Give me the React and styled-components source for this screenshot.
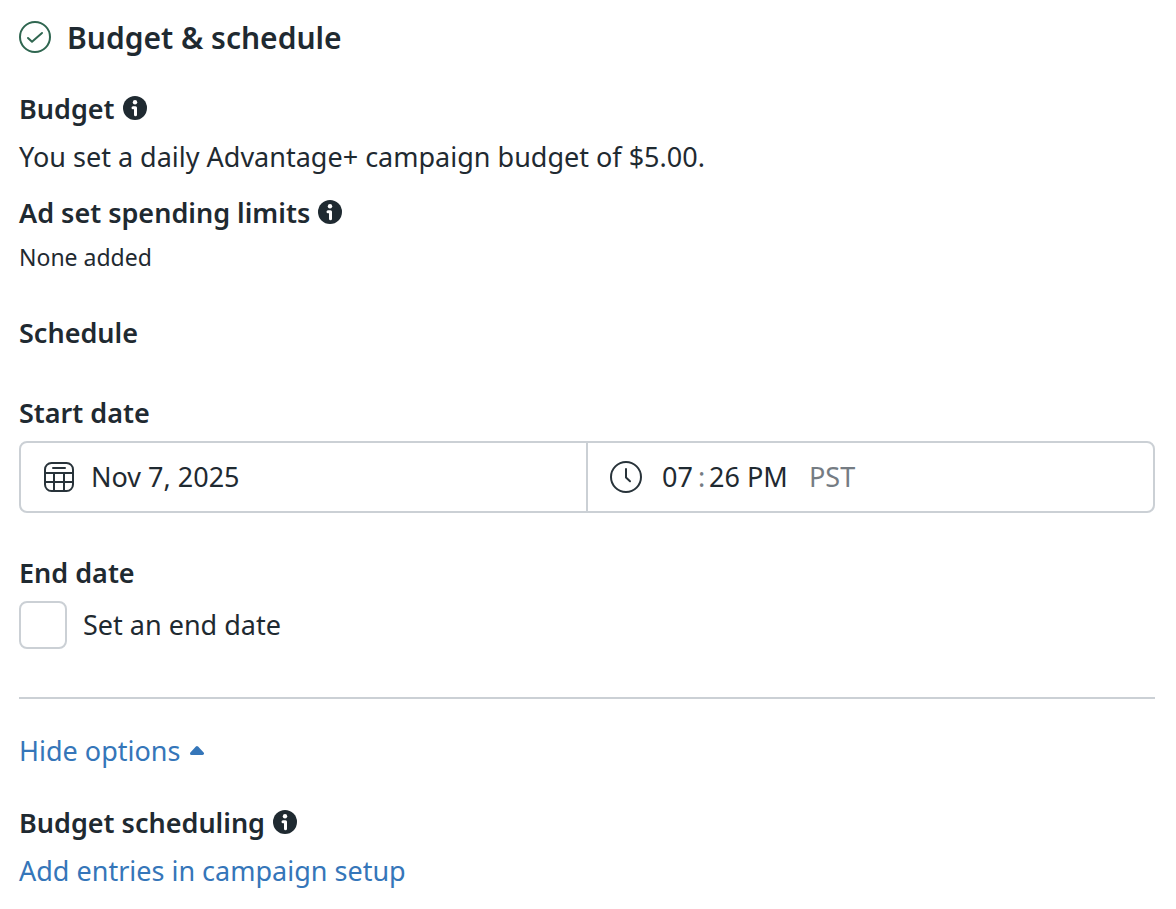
import React from 'react';
import styled, { createGlobalStyle } from 'styled-components';

const GlobalStyle = createGlobalStyle`
  * { box-sizing: border-box; }
  body {
    margin: 0;
    background: #fff;
    color: #1f2a31;
    font-family: "Noto Sans", "Open Sans", sans-serif;
    font-size: 27px;
    line-height: 40px;
  }
  h2, h3, p { margin: 0; font-size: inherit; }
  input, button { font: inherit; color: inherit; }
`;

const Panel = styled.main`
  display: flex;
  flex-direction: column;
  padding: 18px 21px 18px 19px;
`;

const Header = styled.header`
  display: flex;
  align-items: center;
  gap: 16px;
  margin-bottom: 31px;

  svg { margin-bottom: 2px; }
`;

const Title = styled.h2`
  && { font-size: 30px; }
  font-weight: 600;
`;

const Group = styled.section`
  display: flex;
  flex-direction: column;
  gap: ${(p) => p.$gap || 0}px;
  margin-bottom: ${(p) => p.$after || 0}px;
`;

const Heading = styled.h3`
  display: flex;
  align-items: center;
  gap: 8px;
  font-weight: 600;
`;

const InfoButton = styled.button`
  display: flex;
  padding: 0 0 2px;
  border: 0;
  background: none;
  cursor: pointer;
`;

const Note = styled.p`
  && { font-size: 23px; }
`;

const Fields = styled.div`
  display: grid;
  grid-template-columns: 1fr 2px 1fr;
  height: 72px;
  border: 2px solid #cbd0d5;
  border-radius: 8px;
`;

const Separator = styled.div`
  background: #cbd0d5;
`;

const Field = styled.div`
  display: flex;
  align-items: center;
  min-width: 0;
  padding: 0 22px;
  gap: ${(p) => p.$gap}px;

  svg { flex: none; }
`;

const TextInput = styled.input`
  flex: 1;
  min-width: 0;
  height: 40px;
  padding: 0;
  border: 0;
  background: none;
  outline: none;
`;

const Time = styled.div`
  display: flex;
  align-items: center;
`;

const TimePart = styled.input`
  width: ${(p) => p.$width}px;
  height: 40px;
  padding: 0;
  border: 0;
  background: none;
  outline: none;
`;

const Muted = styled.span`
  color: #757c83;
`;

const Colon = styled(Muted)`
  width: 15px;
  text-align: center;
`;

const CheckLabel = styled.label`
  display: flex;
  align-items: center;
  gap: 16px;
`;

const Checkbox = styled.input`
  appearance: none;
  width: 48px;
  height: 48px;
  margin: 0;
  border: 2px solid #cbd0d5;
  border-radius: 8px;
  background: #fff;
  &:checked { background: #3576b9; }
`;

const Divider = styled.hr`
  width: 100%;
  height: 2px;
  margin: 0 0 32px;
  border: 0;
  background: #cbd0d5;
`;

const LinkButton = styled.button`
  display: flex;
  align-items: center;
  align-self: flex-start;
  gap: 10px;
  padding: 0;
  margin-bottom: 32px;
  border: 0;
  background: none;
  && { color: #3576b9; }
  cursor: pointer;
`;

const Link = styled.a`
  align-self: flex-start;
  color: #3576b9;
  text-decoration: none;
`;

const CheckCircle = () => (
  <svg width="32" height="32" viewBox="0 0 32 32" fill="none" stroke="#2f6650" strokeWidth="2" strokeLinecap="round" strokeLinejoin="round" aria-hidden="true">
    <circle cx="16" cy="16" r="15" />
    <path d="M9 17l4 3.700L23 12" />
  </svg>
);

const Info = ({ about }) => (
  <InfoButton type="button" aria-label={`About ${about}`}>
    <svg width="24" height="24" viewBox="0 0 24 24" aria-hidden="true">
      <circle cx="12" cy="12" r="12" fill="#1f2a31" />
      <circle cx="12" cy="6.200" r="2.200" fill="#fff" />
      <path d="M10 11.700h2.500V18.800" fill="none" stroke="#fff" strokeWidth="3" strokeLinecap="round" strokeLinejoin="round" />
    </svg>
  </InfoButton>
);

const CalendarIcon = () => (
  <svg width="32" height="32" viewBox="0 0 32 32" fill="none" stroke="#28333a" strokeWidth="2" aria-hidden="true">
    <rect x="2" y="2" width="28" height="28" rx="6.500" />
    <path d="M10 7h12" strokeLinecap="round" />
    <path d="M2 12h28M2 21h28M11 12v18M21 12v18" />
  </svg>
);

const ClockIcon = () => (
  <svg width="32" height="32" viewBox="0 0 32 32" fill="none" stroke="#28333a" strokeWidth="2" strokeLinecap="round" strokeLinejoin="round" aria-hidden="true">
    <circle cx="16" cy="16" r="15" />
    <path d="M16 8v8.500l4 3.700" />
  </svg>
);

const Caret = () => (
  <svg width="14" height="12" viewBox="0 0 14 12" aria-hidden="true">
    <path d="M1.500 8.500L7 2.500l5.500 6z" fill="#3576b9" stroke="#3576b9" strokeWidth="3" strokeLinejoin="round" />
  </svg>
);

export default function App() {
  return (
    <>
      <GlobalStyle />
      <Panel>
        <Header>
          <CheckCircle />
          <Title>Budget &amp; schedule</Title>
        </Header>

        <Group $gap={8} $after={16}>
          <Heading>Budget <Info about="budget" /></Heading>
          <p>You set a daily Advantage+ campaign budget of $5.00.</p>
        </Group>

        <Group $gap={4} $after={36}>
          <Heading>Ad set spending limits <Info about="ad set spending limits" /></Heading>
          <Note>None added</Note>
        </Group>

        <Group $gap={40}>
          <Heading>Schedule</Heading>
          <Group $gap={8} $after={40}>
            <Heading id="start">Start date</Heading>
            <Fields role="group" aria-labelledby="start">
              <Field $gap={16}>
                <CalendarIcon />
                <TextInput type="text" aria-label="Start day" defaultValue="Nov 7, 2025" />
              </Field>
              <Separator />
              <Field $gap={20}>
                <ClockIcon />
                <Time>
                  <TimePart $width={32} aria-label="Hour" defaultValue="07" />
                  <Colon>:</Colon>
                  <TimePart $width={38} aria-label="Minute" defaultValue="26" />
                  <TimePart $width={42} aria-label="AM or PM" defaultValue="PM" />
                </Time>
                <Muted>PST</Muted>
              </Field>
            </Fields>
          </Group>
        </Group>

        <Group $gap={8} $after={48}>
          <Heading>End date</Heading>
          <CheckLabel>
            <Checkbox type="checkbox" />
            Set an end date
          </CheckLabel>
        </Group>

        <Divider />

        <LinkButton type="button" aria-expanded="true">
          Hide options <Caret />
        </LinkButton>

        <Group $gap={8}>
          <Heading>Budget scheduling <Info about="budget scheduling" /></Heading>
          <Link href="#campaign-setup">Add entries in campaign setup</Link>
        </Group>
      </Panel>
    </>
  );
}
